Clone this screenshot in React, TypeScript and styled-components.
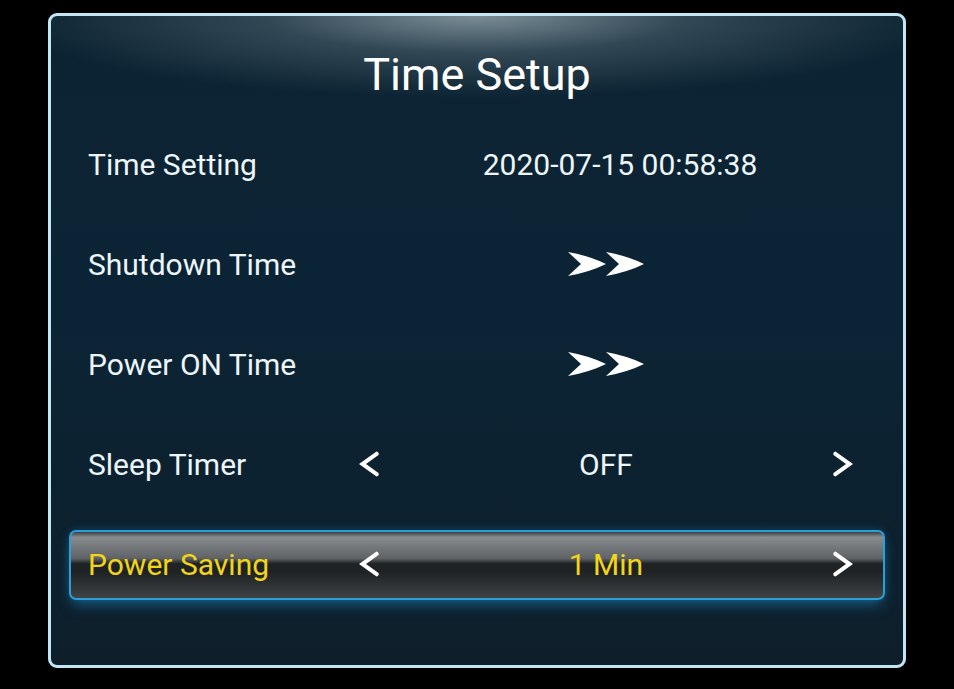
import * as React from 'react'
import styled, { createGlobalStyle, css } from 'styled-components'

const GlobalStyle = createGlobalStyle`
  html, body {
    margin: 0;
    padding: 0;
    background: #000;
  }
  body {
    font-family: Roboto, "Noto Sans", "Liberation Sans", sans-serif;
    -webkit-font-smoothing: antialiased;
  }
`

const Screen = styled.div`
  width: 954px;
  height: 689px;
  padding: 13px 48px 0 48px;
  box-sizing: border-box;
  background: #000;
`

const Panel = styled.div`
  width: 858px;
  height: 655px;
  box-sizing: border-box;
  border: 3px solid #c3e6f4;
  border-radius: 9px;
  display: flex;
  flex-direction: column;
  background:
    radial-gradient(ellipse 470px 82px at 50% 0px, rgba(150, 168, 176, 0.8), rgba(95, 115, 126, 0.45) 45%, rgba(14, 34, 48, 0) 100%),
    linear-gradient(180deg, #0c2332 0%, #0b2435 45%, #0e1f2b 100%);
  overflow: hidden;
`

const Title = styled.div`
  height: 114px;
  padding-top: 2px;
  box-sizing: border-box;
  display: flex;
  align-items: center;
  justify-content: center;
  color: #fff;
  font-size: 45px;
`

const List = styled.div`
  display: flex;
  flex-direction: column;
  gap: 30px;
  padding: 0 18px;
`

const selectedRow = css`
  border-color: #2c9fd6;
  background: linear-gradient(
    180deg,
    #3b3f44 0%,
    #888b8e 8%,
    #606366 40%,
    #202325 48%,
    #1f2224 60%,
    #404346 100%
  );
  box-shadow: 0 7px 14px -3px rgba(28, 140, 200, 0.6), 0 -2px 8px rgba(28, 140, 200, 0.2);
`

const Row = styled.div<{ $selected?: boolean }>`
  height: 70px;
  box-sizing: border-box;
  border: 2px solid transparent;
  border-radius: 7px;
  padding: 0 29px 2px 17px;
  display: grid;
  grid-template-columns: 270px 22px 1fr 22px;
  align-items: center;
  font-size: 30px;
  color: ${p => (p.$selected ? '#f2d419' : '#eef6fa')};
  ${p => p.$selected && selectedRow}
`

const Label = styled.div`
  white-space: nowrap;
`

const Value = styled.div`
  text-align: center;
  white-space: nowrap;
`

const DateValue = styled.div`
  grid-column: 2 / 5;
  text-align: center;
  padding-left: 28px;
  white-space: nowrap;
`

const Enter = styled.div`
  grid-column: 2 / 5;
  display: flex;
  justify-content: center;
  padding-left: 2px;
`

const Arrow = styled.svg`
  display: block;
  width: 22px;
  height: 28px;
`

const Chevron = ({ dir }: { dir: 'left' | 'right' }) => (
  <Arrow viewBox="0 0 22 28">
    <path
      d="M18.5 1.5 Q21.5 2.5 20.5 5 L8 14 L20.5 23 Q21.5 25.5 18.5 26.5 L1 14 Z"
      fill="#fff"
      transform={dir === 'right' ? 'translate(22 0) scale(-1 1)' : undefined}
    />
  </Arrow>
)

const DoubleArrow = () => (
  <svg width="78" height="28" viewBox="0 0 78 28">
    <path d="M0 2 Q22 6 38 14 Q22 22 0 26 L13 14 Z" fill="#fff" />
    <path d="M38 2 Q60 6 76 14 Q60 22 38 26 L51 14 Z" fill="#fff" />
  </svg>
)

interface Option {
  label: string
  kind: 'date' | 'enter' | 'select'
  value?: string
  selected?: boolean
}

const options: Option[] = [
  { label: 'Time Setting', kind: 'date', value: '2020-07-15 00:58:38' },
  { label: 'Shutdown Time', kind: 'enter' },
  { label: 'Power ON Time', kind: 'enter' },
  { label: 'Sleep Timer', kind: 'select', value: 'OFF' },
  { label: 'Power Saving', kind: 'select', value: '1 Min', selected: true },
]

export default function App() {
  return (
    <Screen>
      <GlobalStyle />
      <Panel>
        <Title>Time Setup</Title>
        <List>
          {options.map(opt => (
            <Row key={opt.label} $selected={opt.selected}>
              <Label>{opt.label}</Label>
              {opt.kind === 'date' && <DateValue>{opt.value}</DateValue>}
              {opt.kind === 'enter' && (
                <Enter>
                  <DoubleArrow />
                </Enter>
              )}
              {opt.kind === 'select' && (
                <>
                  <Chevron dir="left" />
                  <Value>{opt.value}</Value>
                  <Chevron dir="right" />
                </>
              )}
            </Row>
          ))}
        </List>
      </Panel>
    </Screen>
  )
}
